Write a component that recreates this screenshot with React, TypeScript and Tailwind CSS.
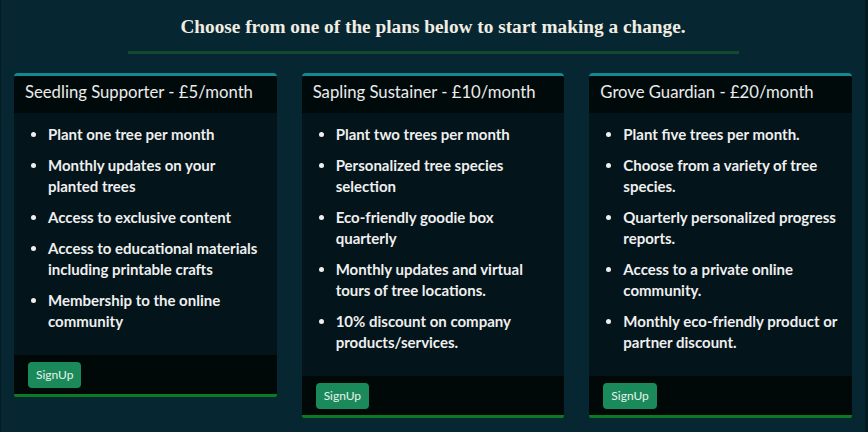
const PLANS = [
  {
    title: 'Seedling Supporter - £5/month',
    items: [
      ['Plant one tree per month'],
      ['Monthly updates on your', 'planted trees'],
      ['Access to exclusive content'],
      ['Access to educational materials', 'including printable crafts'],
      ['Membership to the online', 'community'],
    ],
  },
  {
    title: 'Sapling Sustainer - £10/month',
    items: [
      ['Plant two trees per month'],
      ['Personalized tree species', 'selection'],
      ['Eco-friendly goodie box', 'quarterly'],
      ['Monthly updates and virtual', 'tours of tree locations.'],
      ['10% discount on company', 'products/services.'],
    ],
  },
  {
    title: 'Grove Guardian - £20/month',
    items: [
      ['Plant five trees per month.'],
      ['Choose from a variety of tree', 'species.'],
      ['Quarterly personalized progress', 'reports.'],
      ['Access to a private online', 'community.'],
      ['Monthly eco-friendly product or', 'partner discount.'],
    ],
  },
];

function PlanCard({ title, items }: { title: string; items: string[][] }) {
  return (
    <div className="rounded-t-[4px] rounded-b-[2px] border-t-[3px] border-b-[3px] border-t-[#138a8f] border-b-[#0c7a22] bg-[#03141a] overflow-hidden">
      {/* Header */}
      <div className="h-[37px] flex items-center px-[11px] pb-[4px] bg-[#010a0a] text-[16.7px] text-[#ececec]">
        {title}
      </div>
      {/* Features */}
      <ul className="list-disc pl-[34px] pr-[12px] pt-[11px] pb-[13px] text-[15px] font-bold leading-[21px] text-[#efefef]">
        {items.map((lines, i) => (
          <li key={i} className="mb-[10px] whitespace-nowrap">
            {lines.map((l, j) => (
              <span key={j} className="block">{l}</span>
            ))}
          </li>
        ))}
      </ul>
      {/* Footer */}
      <div className="h-[39px] flex items-center px-[14px] bg-[#000808]">
        <button
          type="button"
          className="h-[26px] px-[8px] rounded-[4px] bg-[#1b8a5a] text-[12px] text-[#e8f2ec]"
        >
          SignUp
        </button>
      </div>
    </div>
  );
}

export default function App() {
  return (
    <div
      className="min-h-[432px] bg-[#062631] border-l border-r-[3px] border-l-[#031c24] border-r-[#031c24]"
      style={{ fontFamily: 'Lato, "Noto Sans", sans-serif' }}
    >
      <div className="pt-[13px] flex flex-col items-center">
        <h1
          className="text-[19.3px] font-bold leading-[28px] text-[#f1ede2]"
          style={{ fontFamily: '"Liberation Serif", serif' }}
        >
          Choose from one of the plans below to start making a change.
        </h1>
        <div className="mt-[10px] w-[611px] h-[3px] bg-[#0e4b31]" />
      </div>
      <div className="grid grid-cols-3 gap-[25px] items-start pl-[13px] pr-[13px] pt-[19px]">
        {PLANS.map((p) => (
          <PlanCard key={p.title} title={p.title} items={p.items} />
        ))}
      </div>
    </div>
  );
}
